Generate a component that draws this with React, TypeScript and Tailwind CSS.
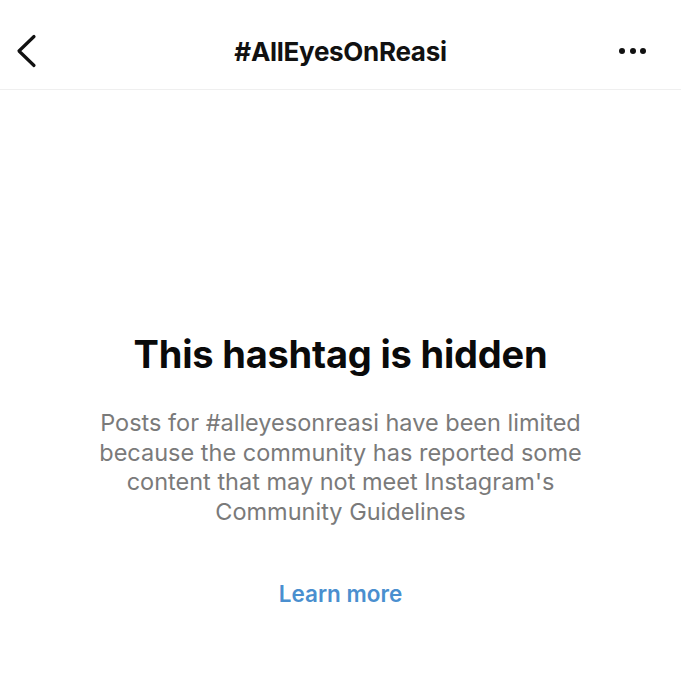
import React from "react";

export default function App() {
  return (
    <div className="w-[681px] h-[675px] bg-white overflow-hidden" style={{ fontFamily: "Inter, 'Noto Sans', sans-serif" }}>
      <div className="relative h-[90px] flex items-start justify-center border-b border-[#efefef]">
        <svg className="absolute left-[14px] top-[34px]" width="24" height="34" viewBox="0 0 24 34" fill="none">
          <path d="M20 2.5 L5 17 L20 31.5" stroke="#111" strokeWidth="3.2" strokeLinecap="round" strokeLinejoin="round" />
        </svg>
        <div className="text-[26px] leading-[32px] font-bold text-[#111] tracking-[-0.3px] mt-[36px]">#AllEyesOnReasi</div>
        <div className="absolute left-[619px] top-[48px] flex gap-[4.5px]">
          <span className="w-[6px] h-[6px] rounded-full bg-[#111]" />
          <span className="w-[6px] h-[6px] rounded-full bg-[#111]" />
          <span className="w-[6px] h-[6px] rounded-full bg-[#111]" />
        </div>
      </div>
      <div className="flex flex-col items-center pt-[241px]">
        <div className="text-[38px] leading-[46px] font-bold text-[#0a0a0a] tracking-[-0.2px]">This hashtag is hidden</div>
        <div className="mt-[31px] text-[23.5px] leading-[29.7px] text-[#7a7a7a] text-center whitespace-nowrap">
          Posts for #alleyesonreasi have been limited
          <br />
          because the community has reported some
          <br />
          content that may not meet Instagram's
          <br />
          Community Guidelines
        </div>
        <div className="mt-[52px] text-[22.5px] leading-[30px] font-semibold text-[#4a8fcf]">Learn more</div>
      </div>
    </div>
  );
}
